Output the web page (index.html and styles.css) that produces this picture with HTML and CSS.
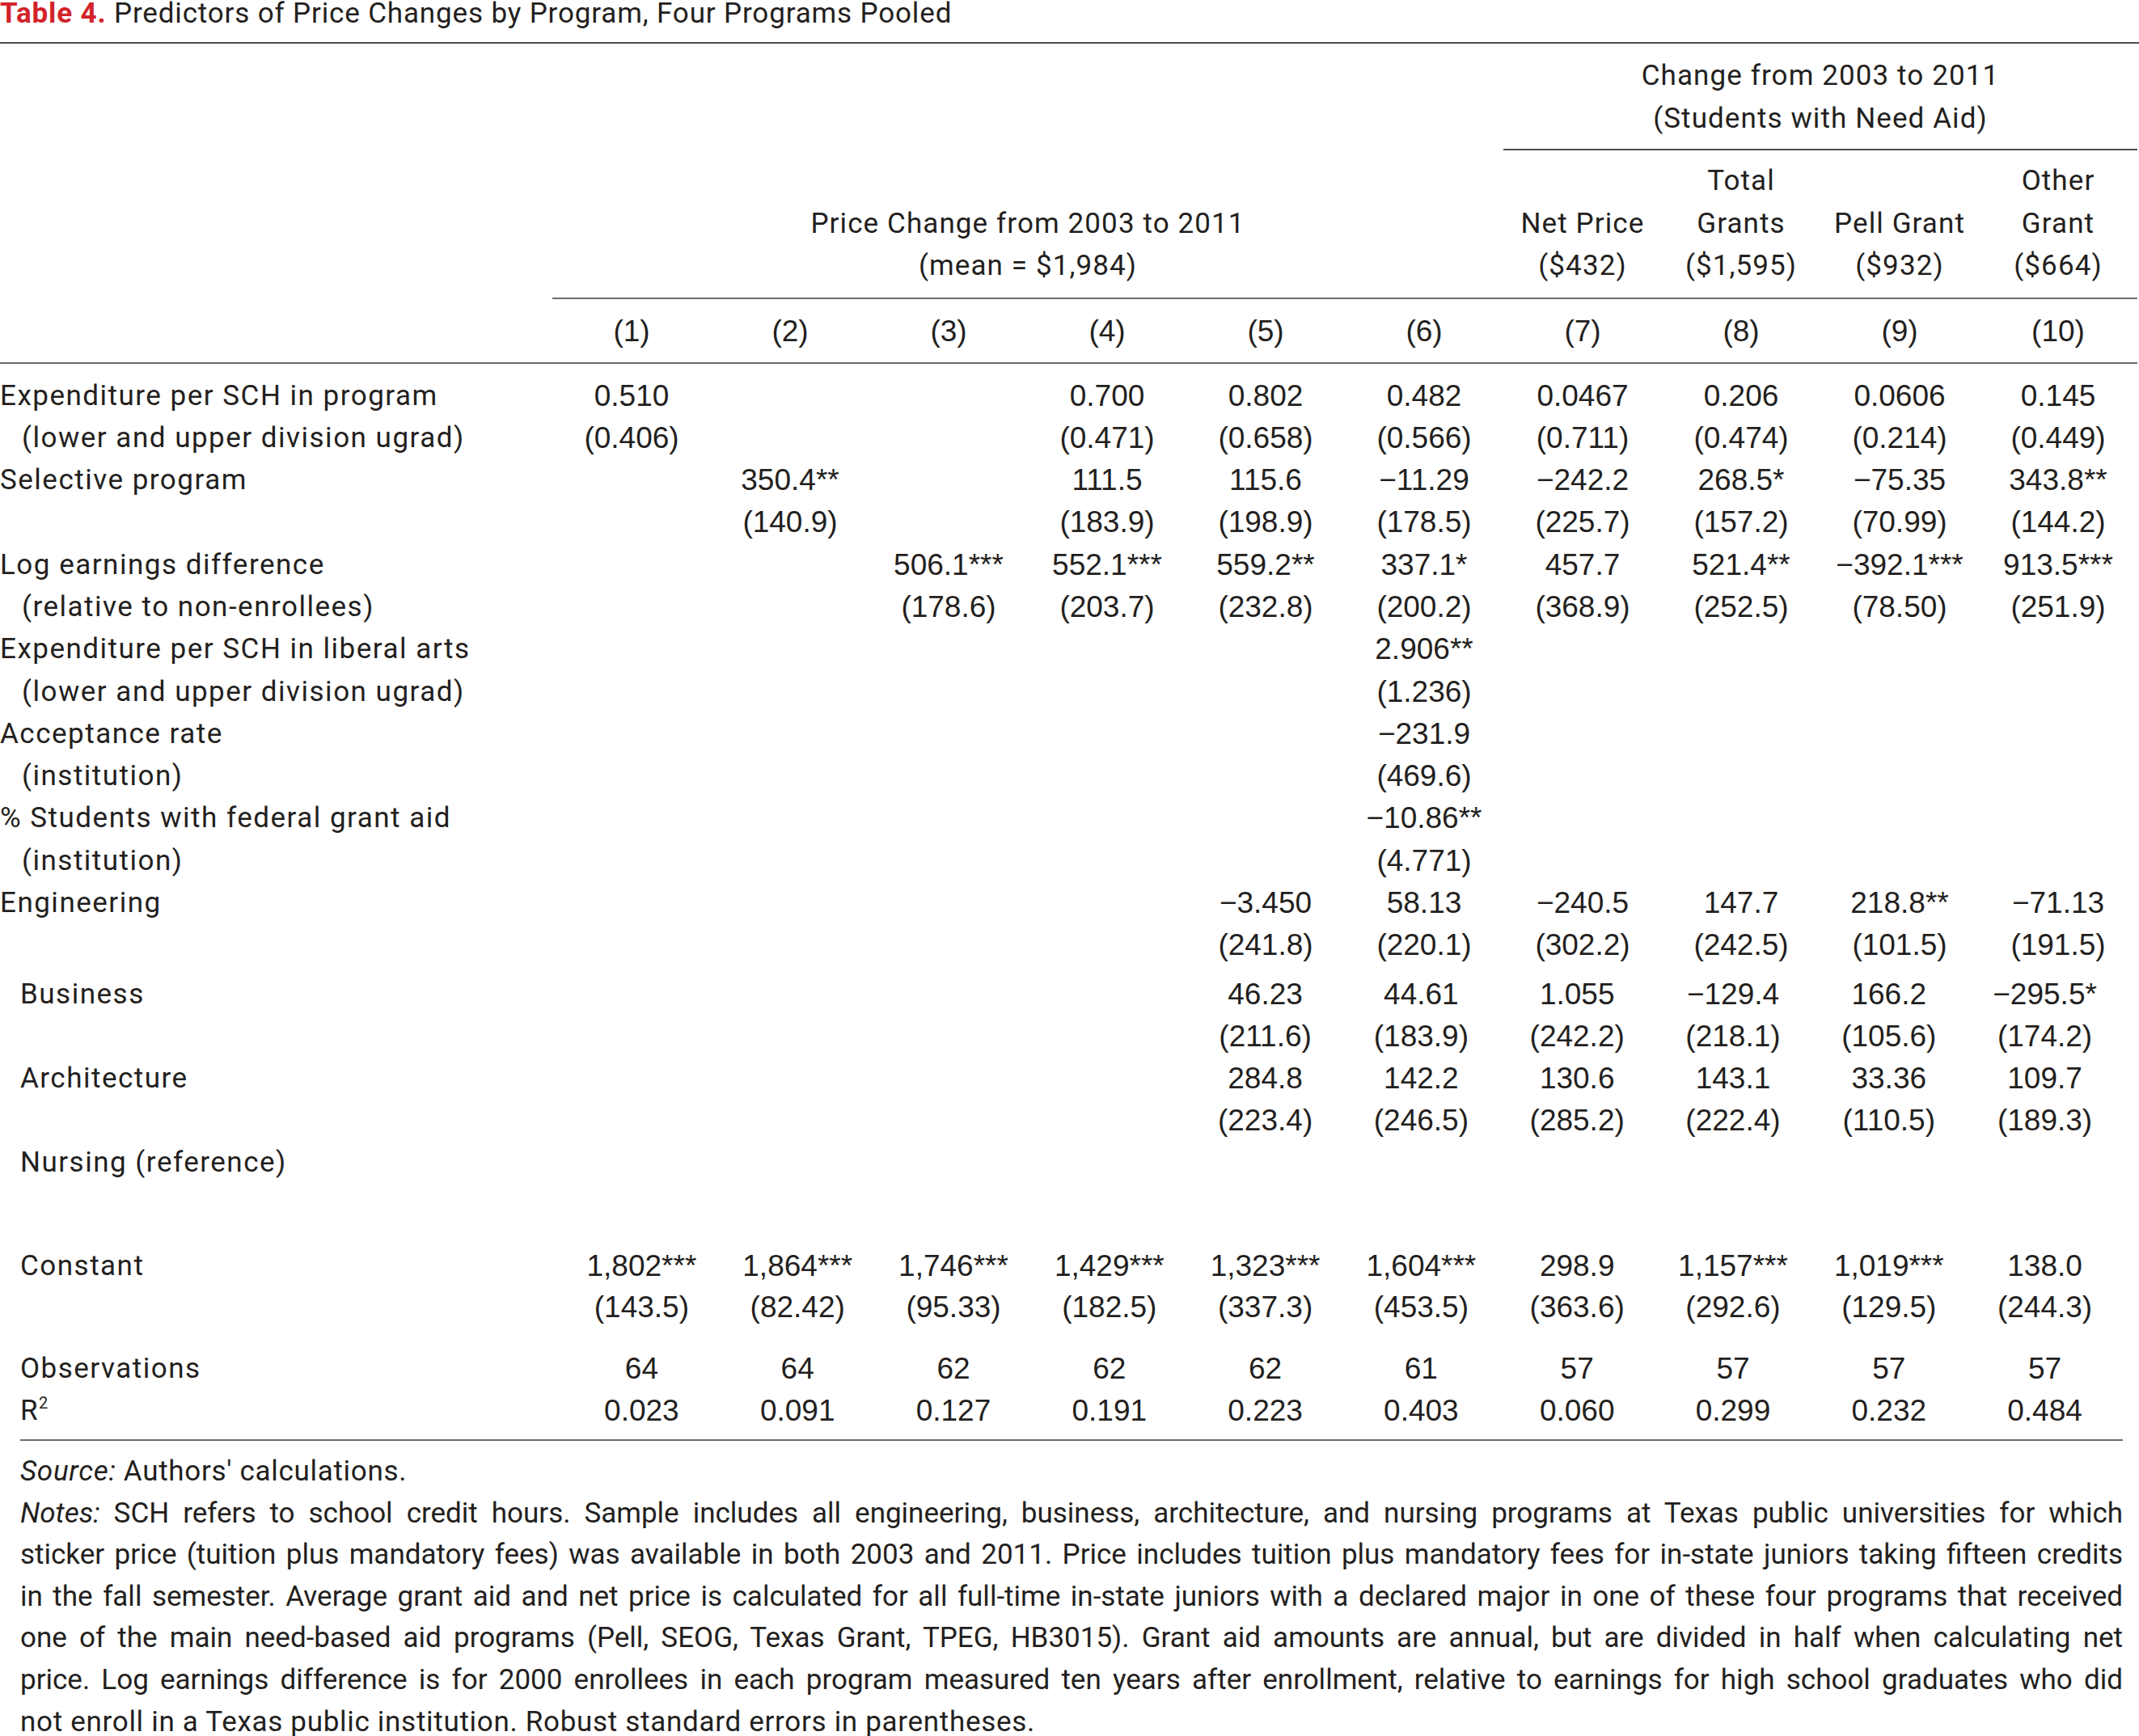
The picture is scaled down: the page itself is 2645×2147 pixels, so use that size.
FILE: index.html
```html
<!DOCTYPE html>
<html lang="en">
<head>
<meta charset="utf-8">
<title>Table 4</title>
<link rel="stylesheet" href="styles.css">
</head>
<body>
<div class="title"><span class="title-num">Table 4.</span> Predictors of Price Changes by Program, Four Programs Pooled</div>

<div class="head">
  <div class="h-need">Change from 2003 to 2011<br>(Students with Need Aid)</div>
  <div class="h-price">Price Change from 2003 to 2011<br>(mean = $1,984)</div>
  <div class="h-col c8">Net Price<br>($432)</div>
  <div class="h-col c9">Total<br>Grants<br>($1,595)</div>
  <div class="h-col c10">Pell Grant<br>($932)</div>
  <div class="h-col c11">Other<br>Grant<br>($664)</div>
  <div class="h-num h-lbl"></div>
  <div class="h-num">(1)</div>
  <div class="h-num">(2)</div>
  <div class="h-num">(3)</div>
  <div class="h-num">(4)</div>
  <div class="h-num">(5)</div>
  <div class="h-num">(6)</div>
  <div class="h-num">(7)</div>
  <div class="h-num">(8)</div>
  <div class="h-num">(9)</div>
  <div class="h-num">(10)</div>
</div>

<div class="body-up">
  <div class="row up"><div class="lbl">Expenditure per SCH in program</div><div class="n">0.510</div><div class="n"></div><div class="n"></div><div class="n">0.700</div><div class="n">0.802</div><div class="n">0.482</div><div class="n">0.0467</div><div class="n">0.206</div><div class="n">0.0606</div><div class="n">0.145</div></div>
  <div class="row up"><div class="lbl ind">(lower and upper division ugrad)</div><div class="n">(0.406)</div><div class="n"></div><div class="n"></div><div class="n">(0.471)</div><div class="n">(0.658)</div><div class="n">(0.566)</div><div class="n">(0.711)</div><div class="n">(0.474)</div><div class="n">(0.214)</div><div class="n">(0.449)</div></div>
  <div class="row up"><div class="lbl">Selective program</div><div class="n"></div><div class="n">350.4**</div><div class="n"></div><div class="n">111.5</div><div class="n">115.6</div><div class="n">−11.29</div><div class="n">−242.2</div><div class="n">268.5*</div><div class="n">−75.35</div><div class="n">343.8**</div></div>
  <div class="row up"><div class="lbl"></div><div class="n"></div><div class="n">(140.9)</div><div class="n"></div><div class="n">(183.9)</div><div class="n">(198.9)</div><div class="n">(178.5)</div><div class="n">(225.7)</div><div class="n">(157.2)</div><div class="n">(70.99)</div><div class="n">(144.2)</div></div>
  <div class="row up"><div class="lbl">Log earnings difference</div><div class="n"></div><div class="n"></div><div class="n">506.1***</div><div class="n">552.1***</div><div class="n">559.2**</div><div class="n">337.1*</div><div class="n">457.7</div><div class="n">521.4**</div><div class="n">−392.1***</div><div class="n">913.5***</div></div>
  <div class="row up"><div class="lbl ind">(relative to non-enrollees)</div><div class="n"></div><div class="n"></div><div class="n">(178.6)</div><div class="n">(203.7)</div><div class="n">(232.8)</div><div class="n">(200.2)</div><div class="n">(368.9)</div><div class="n">(252.5)</div><div class="n">(78.50)</div><div class="n">(251.9)</div></div>
  <div class="row up"><div class="lbl">Expenditure per SCH in liberal arts</div><div class="n"></div><div class="n"></div><div class="n"></div><div class="n"></div><div class="n"></div><div class="n">2.906**</div></div>
  <div class="row up"><div class="lbl ind">(lower and upper division ugrad)</div><div class="n"></div><div class="n"></div><div class="n"></div><div class="n"></div><div class="n"></div><div class="n">(1.236)</div></div>
  <div class="row up"><div class="lbl">Acceptance rate</div><div class="n"></div><div class="n"></div><div class="n"></div><div class="n"></div><div class="n"></div><div class="n">−231.9</div></div>
  <div class="row up"><div class="lbl ind">(institution)</div><div class="n"></div><div class="n"></div><div class="n"></div><div class="n"></div><div class="n"></div><div class="n">(469.6)</div></div>
  <div class="row up"><div class="lbl">% Students with federal grant aid</div><div class="n"></div><div class="n"></div><div class="n"></div><div class="n"></div><div class="n"></div><div class="n">−10.86**</div></div>
  <div class="row up"><div class="lbl ind">(institution)</div><div class="n"></div><div class="n"></div><div class="n"></div><div class="n"></div><div class="n"></div><div class="n">(4.771)</div></div>
  <div class="row up"><div class="lbl">Engineering</div><div class="n"></div><div class="n"></div><div class="n"></div><div class="n"></div><div class="n">−3.450</div><div class="n">58.13</div><div class="n">−240.5</div><div class="n">147.7</div><div class="n">218.8**</div><div class="n">−71.13</div></div>
  <div class="row up"><div class="lbl"></div><div class="n"></div><div class="n"></div><div class="n"></div><div class="n"></div><div class="n">(241.8)</div><div class="n">(220.1)</div><div class="n">(302.2)</div><div class="n">(242.5)</div><div class="n">(101.5)</div><div class="n">(191.5)</div></div>
</div>

<div class="body-low">
  <div class="row low"><div class="lbl">Business</div><div class="n"></div><div class="n"></div><div class="n"></div><div class="n"></div><div class="n">46.23</div><div class="n">44.61</div><div class="n">1.055</div><div class="n">−129.4</div><div class="n">166.2</div><div class="n">−295.5*</div></div>
  <div class="row low"><div class="lbl"></div><div class="n"></div><div class="n"></div><div class="n"></div><div class="n"></div><div class="n">(211.6)</div><div class="n">(183.9)</div><div class="n">(242.2)</div><div class="n">(218.1)</div><div class="n">(105.6)</div><div class="n">(174.2)</div></div>
  <div class="row low"><div class="lbl">Architecture</div><div class="n"></div><div class="n"></div><div class="n"></div><div class="n"></div><div class="n">284.8</div><div class="n">142.2</div><div class="n">130.6</div><div class="n">143.1</div><div class="n">33.36</div><div class="n">109.7</div></div>
  <div class="row low"><div class="lbl"></div><div class="n"></div><div class="n"></div><div class="n"></div><div class="n"></div><div class="n">(223.4)</div><div class="n">(246.5)</div><div class="n">(285.2)</div><div class="n">(222.4)</div><div class="n">(110.5)</div><div class="n">(189.3)</div></div>
  <div class="row low"><div class="lbl">Nursing (reference)</div></div>
  <div class="row low"><div class="lbl"></div></div>
  <div class="row low gap"><div class="lbl">Constant</div><div class="n">1,802***</div><div class="n">1,864***</div><div class="n">1,746***</div><div class="n">1,429***</div><div class="n">1,323***</div><div class="n">1,604***</div><div class="n">298.9</div><div class="n">1,157***</div><div class="n">1,019***</div><div class="n">138.0</div></div>
  <div class="row low"><div class="lbl"></div><div class="n">(143.5)</div><div class="n">(82.42)</div><div class="n">(95.33)</div><div class="n">(182.5)</div><div class="n">(337.3)</div><div class="n">(453.5)</div><div class="n">(363.6)</div><div class="n">(292.6)</div><div class="n">(129.5)</div><div class="n">(244.3)</div></div>
  <div class="row low gap"><div class="lbl">Observations</div><div class="n">64</div><div class="n">64</div><div class="n">62</div><div class="n">62</div><div class="n">62</div><div class="n">61</div><div class="n">57</div><div class="n">57</div><div class="n">57</div><div class="n">57</div></div>
  <div class="row low"><div class="lbl">R<sup class="sq">2</sup></div><div class="n">0.023</div><div class="n">0.091</div><div class="n">0.127</div><div class="n">0.191</div><div class="n">0.223</div><div class="n">0.403</div><div class="n">0.060</div><div class="n">0.299</div><div class="n">0.232</div><div class="n">0.484</div></div>
</div>

<div class="notes">
  <p class="src"><em>Source:</em> Authors' calculations.</p>
  <p class="ln"><em>Notes:</em> SCH refers to school credit hours. Sample includes all engineering, business, architecture, and nursing programs at Texas public universities for which</p>
  <p class="ln">sticker price (tuition plus mandatory fees) was available in both 2003 and 2011. Price includes tuition plus mandatory fees for in-state juniors taking fifteen credits</p>
  <p class="ln">in the fall semester. Average grant aid and net price is calculated for all full-time in-state juniors with a declared major in one of these four programs that received</p>
  <p class="ln">one of the main need-based aid programs (Pell, SEOG, Texas Grant, TPEG, HB3015). Grant aid amounts are annual, but are divided in half when calculating net</p>
  <p class="ln">price. Log earnings difference is for 2000 enrollees in each program measured ten years after enrollment, relative to earnings for high school graduates who did</p>
  <p class="last">not enroll in a Texas public institution. Robust standard errors in parentheses.</p>
</div>
</body>
</html>
```

FILE: styles.css
```css
* { box-sizing: border-box; margin: 0; padding: 0; }

html, body { background: #ffffff; }

body {
  width: 2645px;
  color: #231f20;
  font-family: Roboto, "Liberation Sans", sans-serif;
  font-size: 35px;
  overflow: hidden;
}

.title {
  height: 54px;
  border-bottom: 2px solid #4d4d4d;
  font-size: 35px;
  letter-spacing: 0.85px;
  line-height: 34px;
  white-space: nowrap;
}

.title-num {
  color: #d2232a;
  font-weight: 700;
}

/* ---------- header ---------- */
.head {
  display: grid;
  grid-template-columns: 683px repeat(10, 196px);
  text-align: center;
  line-height: 52.5px;
  letter-spacing: 1.1px;
}

.h-need {
  grid-column: 8 / 12;
  grid-row: 1;
  padding: 14px 0 11px;
  border-bottom: 2px solid #4d4d4d;
}

.h-price,
.h-col {
  grid-row: 2;
  display: flex;
  flex-direction: column;
  justify-content: flex-end;
  padding: 12px 0 12px;
  border-bottom: 2px solid #6b6b6b;
}

.h-price { grid-column: 2 / 8; }
.c8 { grid-column: 8; }
.c9 { grid-column: 9; }
.c10 { grid-column: 10; }
.c11 { grid-column: 11; }

.h-num {
  grid-row: 3;
  padding: 14px 0 12px;
  line-height: 52px;
  border-bottom: 2px solid #6b6b6b;
  font-family: "Liberation Sans", Arial, sans-serif;
  font-size: 37px;
  letter-spacing: 0;
}

/* ---------- body ---------- */
.body-up { padding-top: 14px; }

.row {
  display: grid;
  align-items: center;
  white-space: nowrap;
}

.row.up {
  grid-template-columns: 683px repeat(10, 196px);
  height: 52.3px;
  line-height: 52.3px;
}

.body-low {
  margin-left: 25px;
  width: 2600px;
  padding-top: 8.5px;
  padding-bottom: 9px;
  border-bottom: 2px solid #6b6b6b;
}

.row.low {
  grid-template-columns: 672px repeat(10, 192.8px);
  height: 51.9px;
  line-height: 51.9px;
}

.row.low.gap { margin-top: 24px; }

.lbl {
  text-align: left;
  letter-spacing: 1.5px;
}
.lbl.ind { padding-left: 27px; }

.n {
  text-align: center;
  font-family: "Liberation Sans", Arial, sans-serif;
  font-size: 37px;
}

.sq {
  font-size: 20px;
  vertical-align: 14px;
  line-height: 0;
}

/* ---------- notes ---------- */
.notes {
  margin-left: 25px;
  width: 2600px;
  padding-top: 12px;
  line-height: 51.6px;
}

.notes .src,
.notes .last {
  white-space: nowrap;
  letter-spacing: 0.7px;
}

.notes .ln {
  text-align: justify;
  text-align-last: justify;
}

.notes em { font-style: italic; }
```
